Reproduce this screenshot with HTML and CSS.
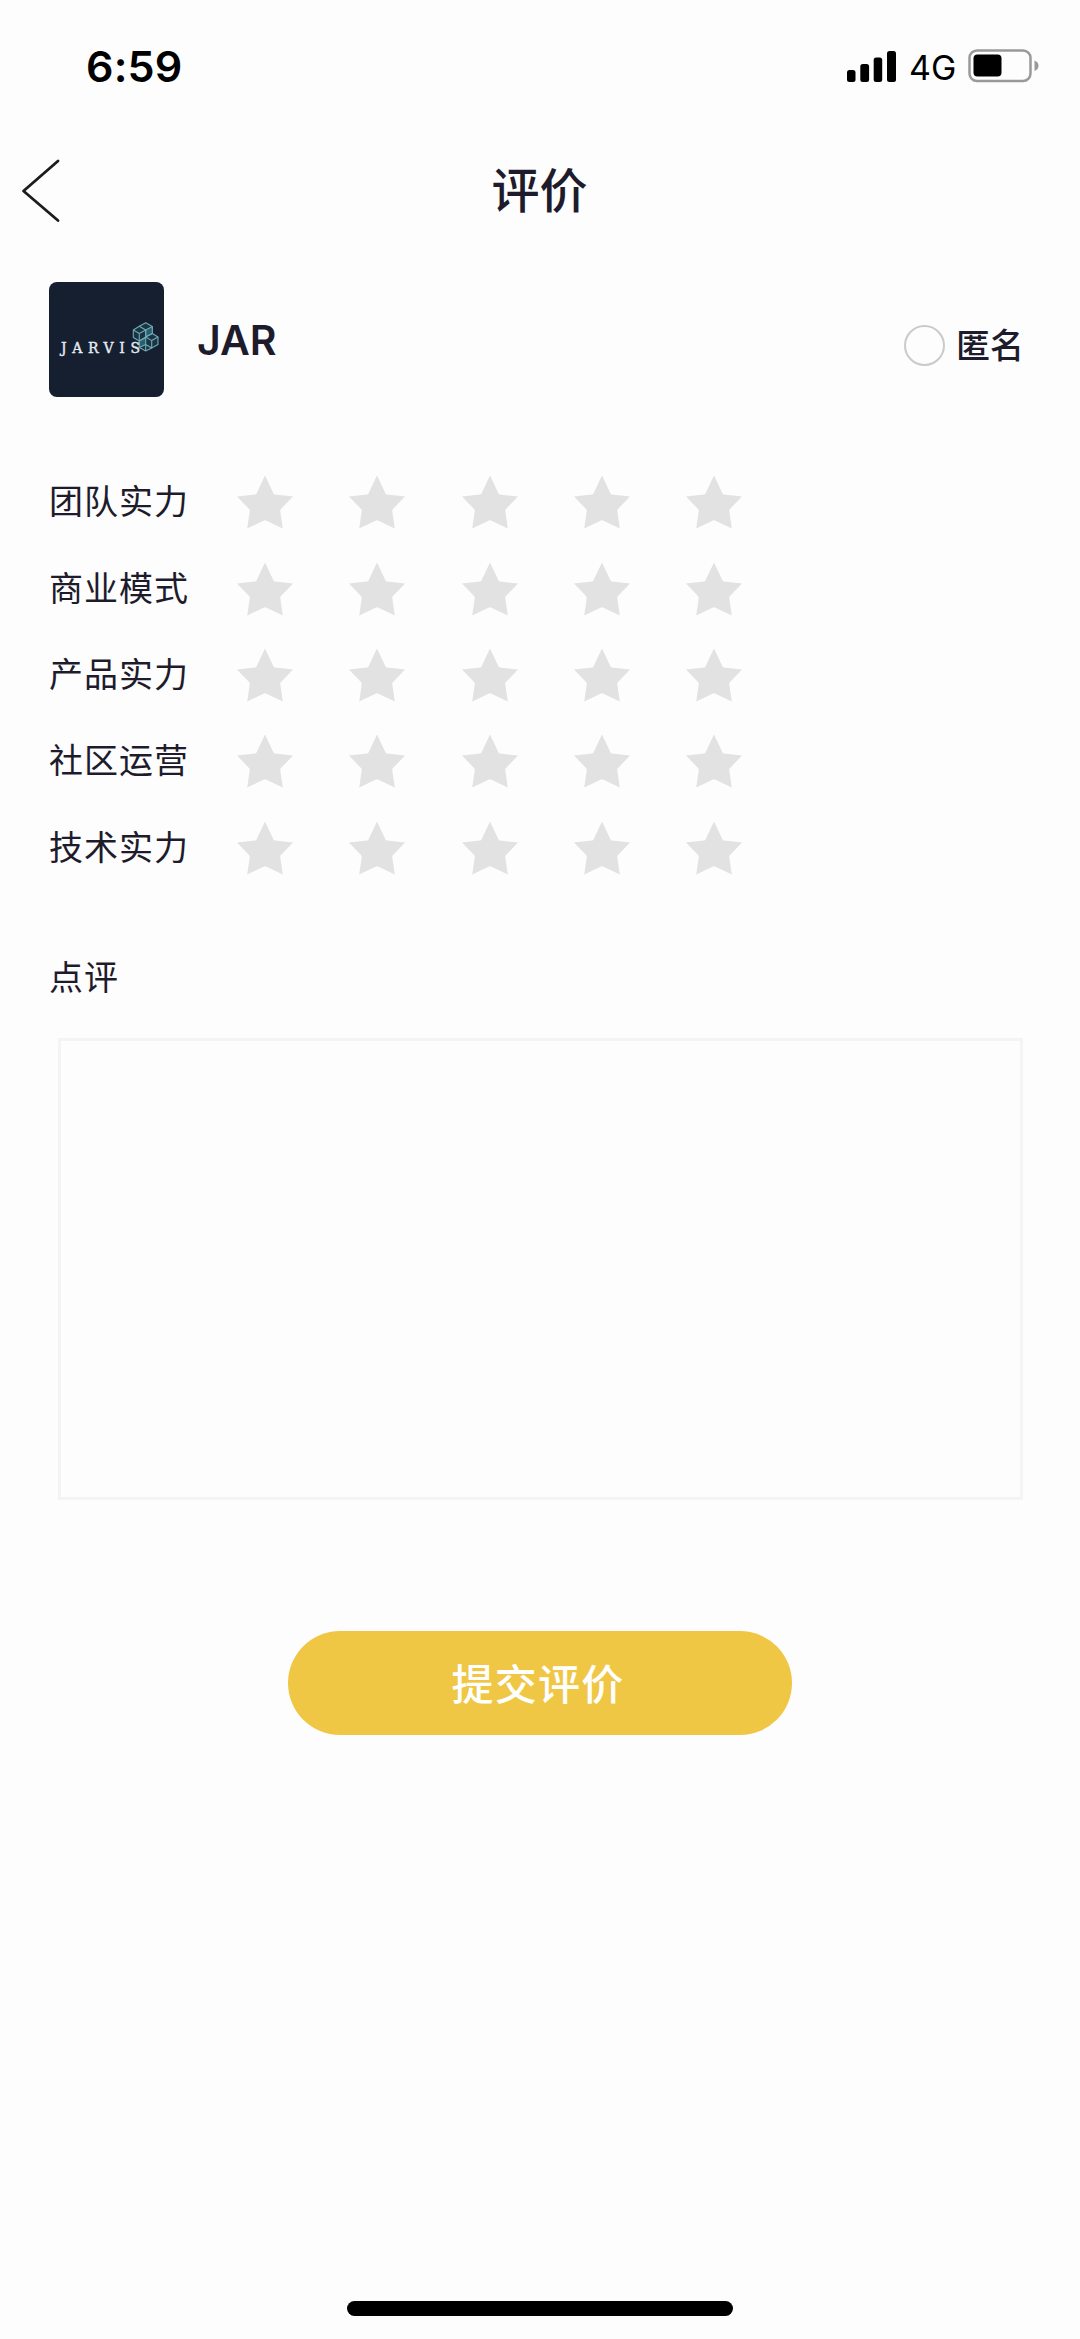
FILE: index.html
```html
<!DOCTYPE html>
<html lang="zh-CN">
<head>
<meta charset="utf-8">
<title>评价</title>
<link rel="stylesheet" href="styles.css">
</head>
<body>
<svg width="0" height="0" class="defs" aria-hidden="true">
  <symbol id="star" viewBox="0 0 58 54">
    <path d="M29 0.500L37.500 18.500Q38 19.500 39 19.600L57 21.500L45 34Q44 35 44.300 36.500L46.800 53.500L30.500 45.700Q29 45 27.500 45.700L11.200 53.500L13.700 36.500Q14 35 13 34L1 21.500L19 19.600Q20 19.500 20.500 18.500Z"/>
  </symbol>
</svg>
<div class="screen">
  <header class="status">
    <span class="time">6:59</span>
    <div class="indicators">
      <svg class="signal" width="50" height="32" viewBox="0 0 50 32">
        <rect x="0" y="20" width="8.500" height="12" rx="2.500"/>
        <rect x="13.300" y="14" width="8.800" height="18" rx="2.500"/>
        <rect x="26.700" y="7.500" width="8.500" height="24.500" rx="2.500"/>
        <rect x="40" y="1" width="9" height="31" rx="2.500"/>
      </svg>
      <span class="network">4G</span>
      <svg class="battery" width="72" height="34" viewBox="0 0 72 34">
        <rect x="1.500" y="1.500" width="61" height="30.500" rx="7.500" fill="none" stroke="#999" stroke-width="2.500"/>
        <rect x="5.500" y="5.500" width="28" height="22" rx="4" fill="#000"/>
        <path d="M66.500 11.500Q70.500 13 70.500 16.700T66.500 22Z" fill="#999"/>
      </svg>
    </div>
  </header>
  <nav class="navbar">
    <svg class="back" width="40" height="64" viewBox="0 0 40 64">
      <path d="M38 2L3.500 32L38 61.500" fill="none" stroke="#1c1c20" stroke-width="2.800" stroke-linecap="round" stroke-linejoin="round"/>
    </svg>
    <h1>评价</h1>
  </nav>
  <section class="project">
    <svg class="logo" width="115" height="115" viewBox="0 0 115 115">
      <rect width="115" height="115" rx="8" fill="#151f2f"/>
      <g fill="none" stroke="#6fa9b6" stroke-width="1.100" stroke-linejoin="round" transform="translate(-1 0)">
        <path d="M97.700 40.700L104.300 44.500V51.500L110 55V62.500L103.700 66L97.700 69L91.300 65.500V59L85.300 55.500V48L91.300 44.300Z" fill="#1b3442"/>
        <path d="M97.700 48L104.300 44.500V51.500L97.700 55ZM91.300 59L97.700 55.500V62.500L91.300 65.500Z" fill="#28606f"/>
        <path d="M91.300 44.300L97.700 48L91.300 51.500L85.300 48M91.300 51.500V59L97.700 55V48"/>
        <path d="M104.300 51.500L97.700 55L103.700 58.600L110 55M103.700 58.600V66L97.700 62.500V69"/>
      </g>
      <text class="logo-text" x="12" y="70.500" textLength="79" lengthAdjust="spacing">JARVIS</text>
    </svg>
    <span class="name">JAR</span>
    <label class="anonymous"><span class="radio"></span>匿名</label>
  </section>
  <section class="ratings">
    <div class="row"><span class="label">团队实力</span><div class="stars"><svg><use href="#star"/></svg><svg><use href="#star"/></svg><svg><use href="#star"/></svg><svg><use href="#star"/></svg><svg><use href="#star"/></svg></div></div>
    <div class="row"><span class="label">商业模式</span><div class="stars"><svg><use href="#star"/></svg><svg><use href="#star"/></svg><svg><use href="#star"/></svg><svg><use href="#star"/></svg><svg><use href="#star"/></svg></div></div>
    <div class="row"><span class="label">产品实力</span><div class="stars"><svg><use href="#star"/></svg><svg><use href="#star"/></svg><svg><use href="#star"/></svg><svg><use href="#star"/></svg><svg><use href="#star"/></svg></div></div>
    <div class="row"><span class="label">社区运营</span><div class="stars"><svg><use href="#star"/></svg><svg><use href="#star"/></svg><svg><use href="#star"/></svg><svg><use href="#star"/></svg><svg><use href="#star"/></svg></div></div>
    <div class="row"><span class="label">技术实力</span><div class="stars"><svg><use href="#star"/></svg><svg><use href="#star"/></svg><svg><use href="#star"/></svg><svg><use href="#star"/></svg><svg><use href="#star"/></svg></div></div>
  </section>
  <section class="review">
    <span class="label">点评</span>
    <textarea aria-label="点评"></textarea>
  </section>
  <button class="submit" type="button">提交评价</button>
  <div class="home-bar"></div>
</div>
</body>
</html>
```
FILE: styles.css
```css
* { box-sizing: border-box; }

body {
  margin: 0;
  background: #fdfdfd;
  color: #1e1c2c;
  font-family: "Inter", "Noto Sans CJK SC", sans-serif;
}

svg { display: block; flex: none; }
.defs { display: none; }

.screen {
  display: flex;
  flex-direction: column;
  width: 1080px;
  height: 2339px;
}

.status {
  display: flex;
  justify-content: space-between;
  height: 132px;
  padding: 0 40px 0 86px;
  color: #000;
}

.time {
  padding-top: 40px;
  font-size: 43px;
  font-weight: 600;
  line-height: 52px;
  letter-spacing: 0.2px;
}

.indicators {
  display: flex;
  align-items: center;
  height: 132px;
}

.network {
  width: 46px;
  margin: 3px 13px 0 12px;
  font-size: 34px;
  line-height: 40px;
  white-space: nowrap;
}

.navbar {
  display: grid;
  grid-template-columns: 80px 1fr 80px;
  align-items: center;
  height: 117px;
}

.back { margin-left: 20px; }

h1 {
  margin: 0 1px 0 0;
  font-size: 48px;
  font-weight: 500;
  line-height: 70px;
  text-align: center;
}

.project {
  display: flex;
  align-items: center;
  height: 115px;
  margin-top: 33px;
  padding: 0 56px 0 49px;
}

.logo-text {
  fill: #e4ebf2;
  stroke: #e4ebf2;
  stroke-width: 0.4px;
  font-family: "DejaVu Serif", serif;
  font-size: 14px;
}

.name {
  margin-left: 33px;
  font-size: 41px;
  font-weight: 600;
  line-height: 50px;
}

.anonymous {
  display: flex;
  align-items: center;
  gap: 11px;
  margin: 12px 0 0 auto;
  font-size: 34px;
  font-weight: 500;
  line-height: 46px;
}

.radio {
  width: 41px;
  height: 41px;
  border: 2px solid #cacaca;
  border-radius: 50%;
}

.ratings {
  display: grid;
  grid-auto-rows: 86.400px;
  margin-top: 62px;
  padding-left: 49px;
}

.row {
  display: grid;
  grid-template-columns: 187px auto;
  align-items: center;
}

.label {
  font-size: 34px;
  line-height: 50px;
  letter-spacing: 1px;
}

.stars {
  display: flex;
  gap: 54.300px;
}

.stars svg {
  width: 58px;
  height: 54px;
  fill: #e2e2e2;
}

.review {
  display: flex;
  flex-direction: column;
  gap: 35px;
  margin-top: 62px;
  padding: 0 57px 0 49px;
}

textarea {
  height: 462px;
  margin-left: 9px;
  border: 3px solid #f4f4f4;
  background: transparent;
  resize: none;
}

.submit {
  align-self: center;
  width: 504px;
  height: 104px;
  margin-top: 131px;
  padding: 0 4px 2px 0;
  border: 0;
  border-radius: 52px;
  background: #f0c745;
  color: #fff;
  font: 500 42px/60px "Noto Sans CJK SC", sans-serif;
  letter-spacing: 1.2px;
}

.home-bar {
  align-self: center;
  width: 386px;
  height: 15px;
  margin: auto 0 23px;
  border-radius: 8px;
  background: #000;
}
```
